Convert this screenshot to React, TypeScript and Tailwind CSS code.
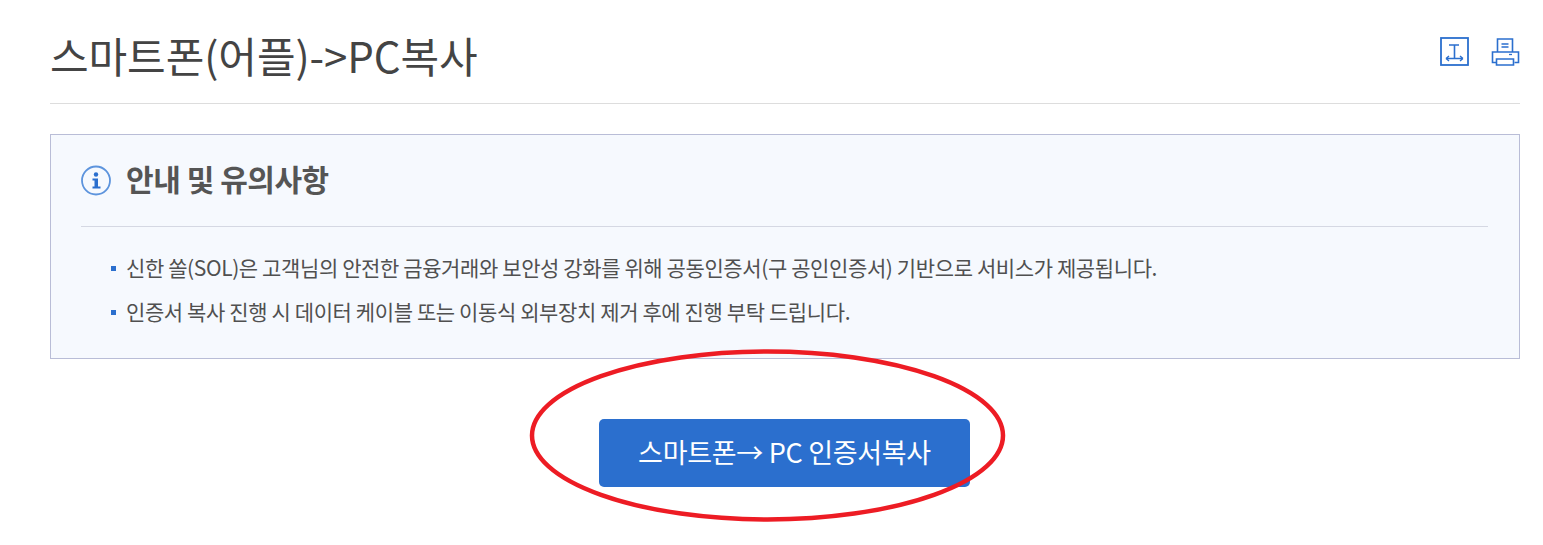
export default function App() {
  const font = { fontFamily: '"Noto Sans CJK KR", "Noto Sans", sans-serif' };
  return (
    <div className="relative h-[545px] w-[1543px] overflow-hidden bg-white pl-[50px] pr-[23px] font-['Noto_Sans_CJK_KR',sans-serif]" style={font}>
      <div className="flex h-[104px] items-start justify-between border-b border-[#dddddd]">
        <h1 className="mt-[23px] text-[42px] leading-[64px] font-normal tracking-[-0.08px] text-[#444444]">스마트폰(어플)-&gt;PC복사</h1>
        <div className="mt-[37px] flex items-start gap-[21px]">
          <svg width="30" height="30" viewBox="0 0 30 30" fill="none" stroke="#2b6fce" strokeWidth="1.8">
            <rect x="1" y="1" width="27" height="27" />
            <path d="M9 8h10M14.500 8v13.500" strokeWidth="1.600" />
            <path d="M6 21.500h17M6 21.500l3-2.500M6 21.500l3 2.500M23 21.500l-3-2.500M23 21.500l-3 2.500" strokeWidth="1.400" />
          </svg>
          <svg width="29" height="30" viewBox="0 0 29 30" fill="none" stroke="#2b6fce" strokeWidth="1.600">
            <path d="M6.500 15V2h15v13" />
            <path d="M10.500 7h7M10.500 10h7" strokeWidth="1.300" />
            <path d="M5.500 25.500h-4V15h26v10.500h-4" />
            <path d="M5.500 22h17v6h-17z" />
            <path d="M18 17.500h3" strokeWidth="1.300" />
          </svg>
        </div>
      </div>
      <div className="mt-[30px] h-[225px] border border-[#b9bdd7] bg-[#f6f9fe] pl-[30px] pr-[31px]">
        <div className="flex h-[92px] items-start border-b border-[#d5d8e3]">
          <svg className="mt-[30px]" width="31" height="31" viewBox="0 0 31 31" fill="none">
            <circle cx="15" cy="15.500" r="14" stroke="#5d94dd" strokeWidth="1.800" />
            <circle cx="15" cy="9.500" r="2.200" fill="#2b6fce" />
            <path d="M11.500 13.500h5.500v8h2.500v2h-8v-2h2v-6h-2z" fill="#2b6fce" />
          </svg>
          <h2 className="ml-[14px] mt-[21px] text-[30px] leading-[45px] font-bold tracking-[-0.45px] text-[#555555]">안내 및 유의사항</h2>
        </div>
        <ul className="mt-[18px] pl-[30px] text-[21px] leading-[44px] tracking-[-0.39px] text-[#505050]">
          <li className="relative pl-[15px]">
            <span className="absolute left-0 top-[21px] h-[5px] w-[5px] bg-[#2b6fce]" />
            신한 쏠(SOL)은 고객님의 안전한 금융거래와 보안성 강화를 위해 공동인증서(구 공인인증서) 기반으로 서비스가 제공됩니다.
          </li>
          <li className="relative pl-[15px]">
            <span className="absolute left-0 top-[21px] h-[5px] w-[5px] bg-[#2b6fce]" />
            인증서 복사 진행 시 데이터 케이블 또는 이동식 외부장치 제거 후에 진행 부탁 드립니다.
          </li>
        </ul>
      </div>
      <div className="mt-[60px] flex pl-[549px]">
        <button className="h-[68px] w-[371px] rounded-[5px] bg-[#2b6fce] pb-[2px] text-[27px] leading-[66px] tracking-[-0.3px] text-white">스마트폰→ PC 인증서복사</button>
      </div>
      <svg className="pointer-events-none absolute left-[525px] top-[345px]" width="485" height="182" viewBox="0 0 485 182" fill="none">
        <ellipse cx="242.500" cy="90.500" rx="235.500" ry="84" stroke="#ed1c24" strokeWidth="4.500" />
      </svg>
    </div>
  );
}
